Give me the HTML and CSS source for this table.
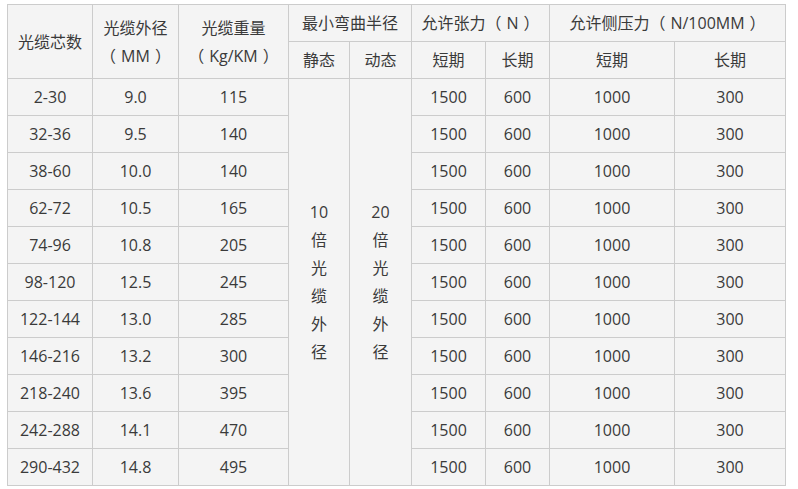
FILE: index.html
```html
<!DOCTYPE html>
<html lang="zh">
<head>
<meta charset="utf-8">
<link rel="stylesheet" href="styles.css">
</head>
<body>
<div class="wrap">
<table class="spec">
<colgroup>
<col class="c1"><col class="c2"><col class="c3"><col class="c4"><col class="c5"><col class="c6"><col class="c7"><col class="c8"><col class="c9">
</colgroup>
<thead>
<tr>
<th rowspan="2">光缆芯数</th>
<th rowspan="2">光缆外径<br><span class="pl">（</span>MM<span class="pr">）</span></th>
<th rowspan="2">光缆重量<br><span class="pl">（</span>Kg/KM<span class="pr">）</span></th>
<th colspan="2">最小弯曲半径</th>
<th colspan="2">允许张力<span class="pl">（</span>N<span class="pr">）</span></th>
<th colspan="2">允许侧压力<span class="pl">（</span>N/100MM<span class="pr">）</span></th>
</tr>
<tr>
<th>静态</th><th>动态</th><th>短期</th><th>长期</th><th>短期</th><th>长期</th>
</tr>
</thead>
<tbody>
<tr><td>2-30</td><td>9.0</td><td>115</td><td rowspan="11" class="vert">10<br>倍<br>光<br>缆<br>外<br>径</td><td rowspan="11" class="vert">20<br>倍<br>光<br>缆<br>外<br>径</td><td>1500</td><td>600</td><td>1000</td><td>300</td></tr>
<tr><td>32-36</td><td>9.5</td><td>140</td><td>1500</td><td>600</td><td>1000</td><td>300</td></tr>
<tr><td>38-60</td><td>10.0</td><td>140</td><td>1500</td><td>600</td><td>1000</td><td>300</td></tr>
<tr><td>62-72</td><td>10.5</td><td>165</td><td>1500</td><td>600</td><td>1000</td><td>300</td></tr>
<tr><td>74-96</td><td>10.8</td><td>205</td><td>1500</td><td>600</td><td>1000</td><td>300</td></tr>
<tr><td>98-120</td><td>12.5</td><td>245</td><td>1500</td><td>600</td><td>1000</td><td>300</td></tr>
<tr><td>122-144</td><td>13.0</td><td>285</td><td>1500</td><td>600</td><td>1000</td><td>300</td></tr>
<tr><td>146-216</td><td>13.2</td><td>300</td><td>1500</td><td>600</td><td>1000</td><td>300</td></tr>
<tr><td>218-240</td><td>13.6</td><td>395</td><td>1500</td><td>600</td><td>1000</td><td>300</td></tr>
<tr><td>242-288</td><td>14.1</td><td>470</td><td>1500</td><td>600</td><td>1000</td><td>300</td></tr>
<tr><td>290-432</td><td>14.8</td><td>495</td><td>1500</td><td>600</td><td>1000</td><td>300</td></tr>
</tbody>
</table>
</div>
</body>
</html>
```
FILE: styles.css
```css
html, body {
  margin: 0;
  padding: 0;
  background: #ffffff;
}
.wrap {
  padding: 4px 0 0 7px;
}
.spec {
  border-collapse: collapse;
  table-layout: fixed;
  width: 778px;
  background: #f4f4f4;
  font-family: "Open Sans", "Noto Sans CJK SC", sans-serif;
  font-size: 16px;
  color: #3a3a3a;
}
.c1 { width: 85px; }
.c2 { width: 86px; }
.c3 { width: 110px; }
.c4 { width: 61px; }
.c5 { width: 62px; }
.c6 { width: 74px; }
.c7 { width: 64px; }
.c8 { width: 125px; }
.c9 { width: 111px; }
.spec th, .spec td {
  border: 1px solid #cccccc;
  text-align: center;
  vertical-align: middle;
  font-weight: normal;
  padding: 0;
  line-height: 28px;
  height: 36px;
}
.spec .pl {
  margin-right: 5px;
}
.spec .pr {
  margin-left: 5px;
}
```
